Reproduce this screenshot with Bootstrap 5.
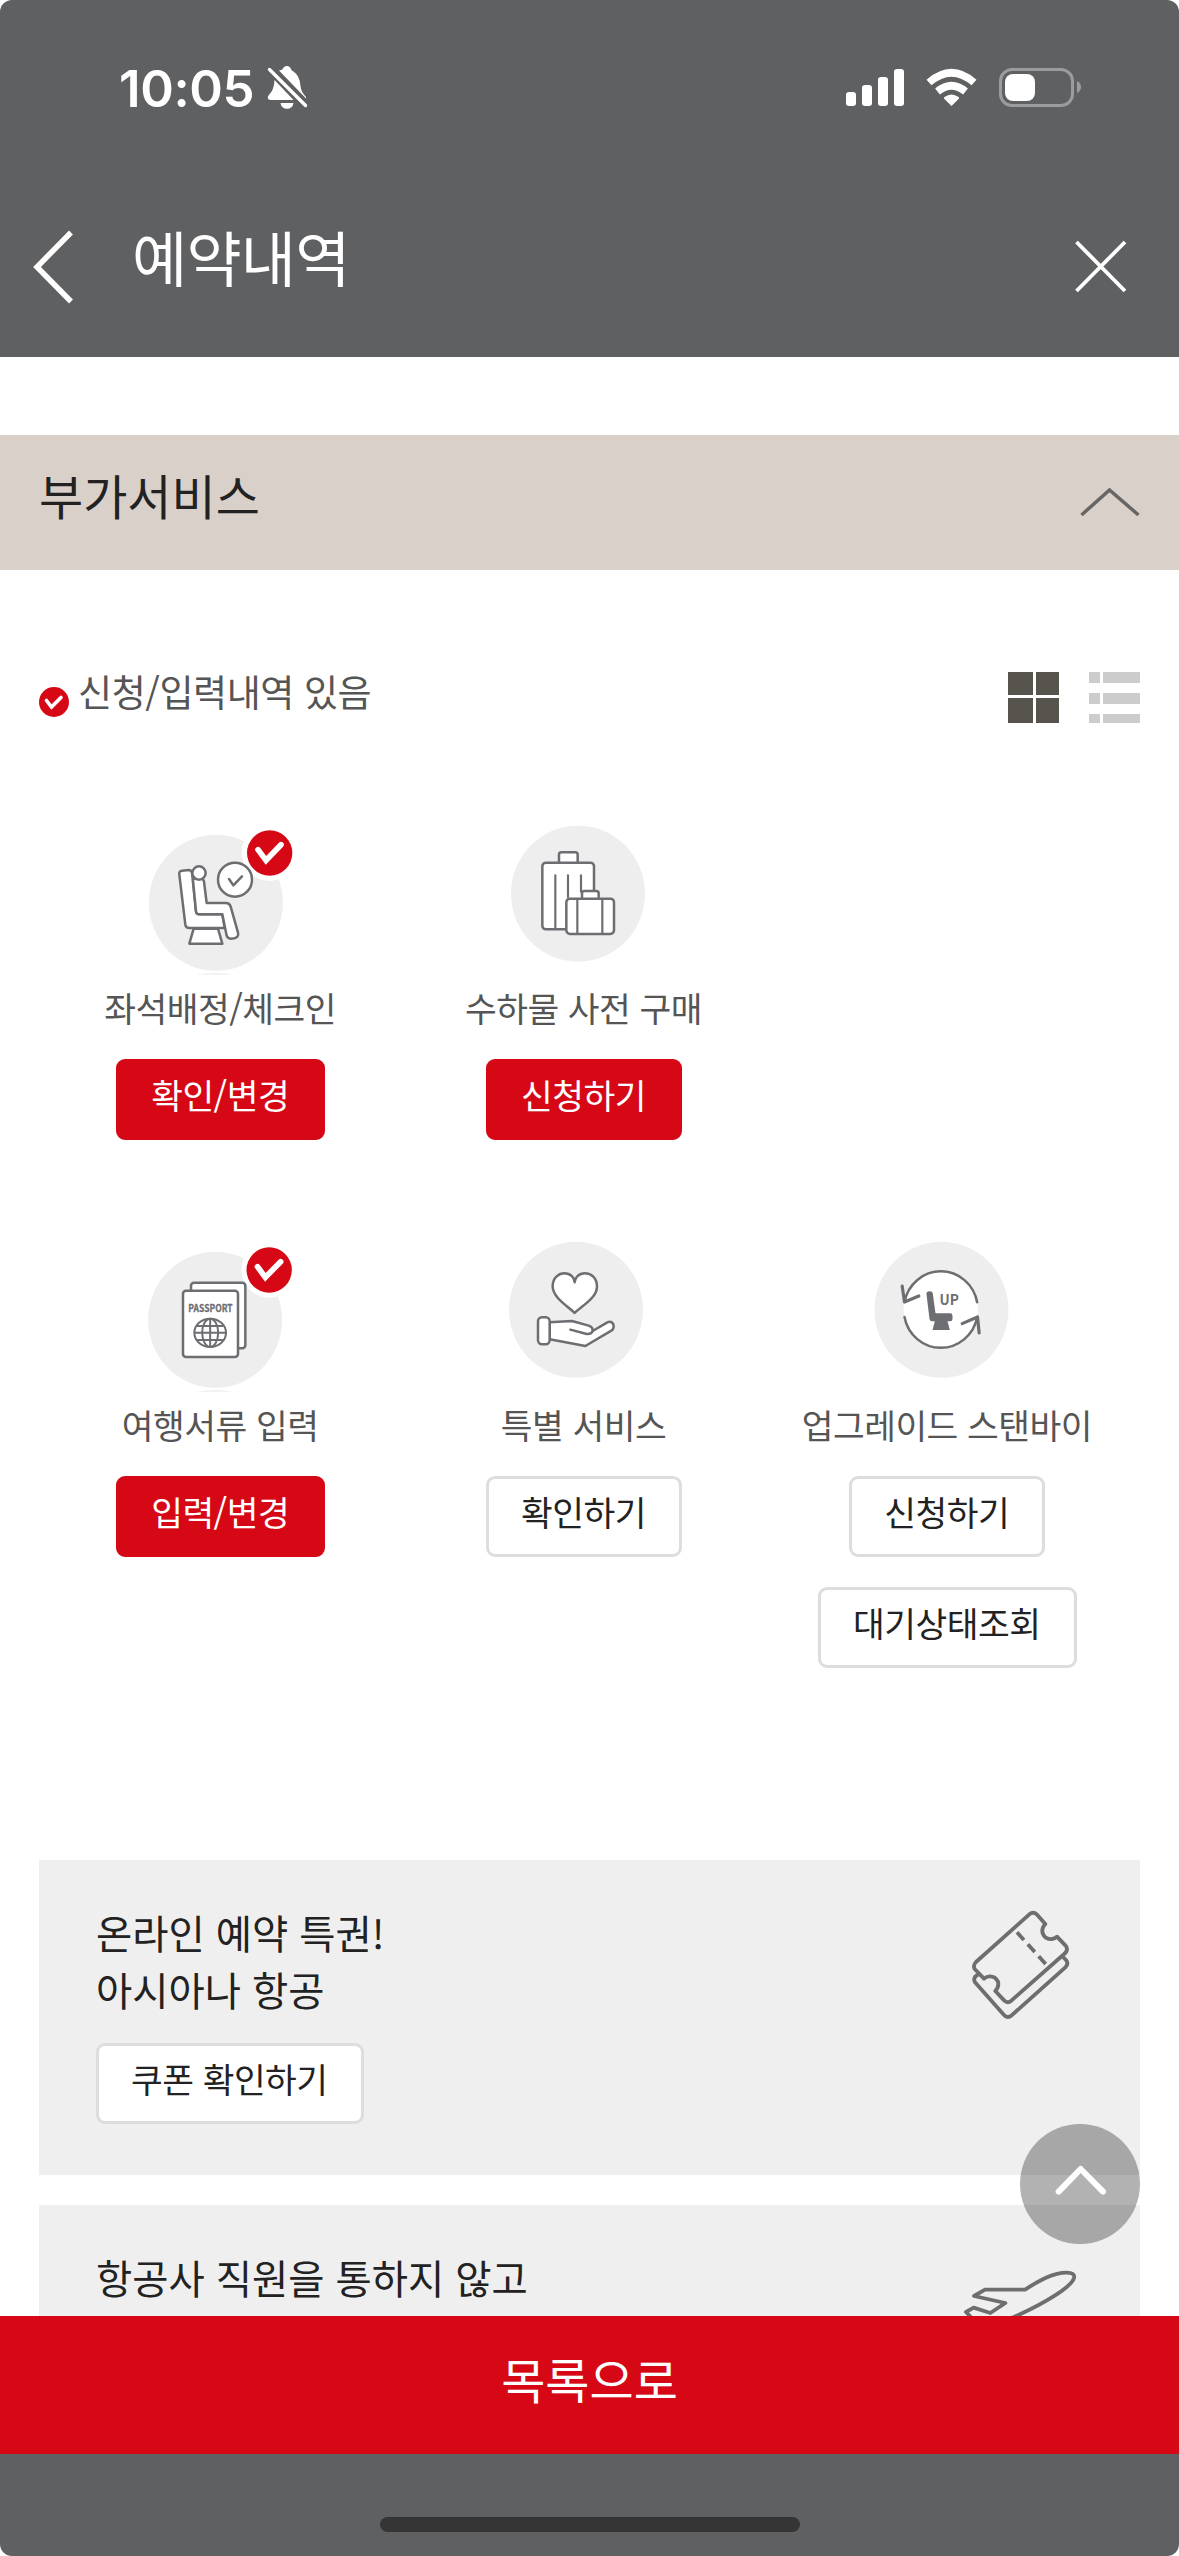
<!DOCTYPE html>
<html lang="ko">
<head>
<meta charset="utf-8">
<meta name="viewport" content="width=device-width, initial-scale=1">
<title>예약내역</title>
<link href="https://cdn.jsdelivr.net/npm/bootstrap@5.3.0/dist/css/bootstrap.min.css" rel="stylesheet">
<style>
  :root { --brand: #d60815; --bar: #5f6062; --line: #6d6e72; }
  body { font-family: "Noto Sans CJK KR", "Noto Sans", sans-serif; color: #222; background: #fff; }
  svg { display: block; flex: none; }
  .screen { width: 1179px; height: 2556px; }
  .app-bar { height: 357px; background: var(--bar); border-radius: 12px 12px 0 0; }
  .status-row { height: 176px; padding: 0 98px 0 119px; }
  .clock { font: 600 51px/1 Inter, sans-serif; width: 139px; letter-spacing: -.4px; }
  .title-row { height: 181px; padding: 0 50px 0 32px; }
  .page-title { font-size: 60px; line-height: 80px; letter-spacing: -.8px; margin: 0 0 22px 58px; font-weight: 400; }
  .section-bar { height: 135px; margin-top: 78px; background: #dad0ca; padding: 0 39px; }
  .section-title { font-size: 48px; line-height: 70px; margin: 0 0 17px; font-weight: 400; }
  .legend-row { height: 51px; margin: 102px 39px 0; }
  .legend-text { font-size: 37px; line-height: 50px; color: #555; letter-spacing: -.4px; margin: 0 0 13px 9px; }
  .services { margin: 95px 50px 0 39px; height: 1042px; }
  .service { height: 417px; }
  .service-name { font-size: 34.5px; line-height: 50px; letter-spacing: -.5px; color: #555; margin: 4px 1px 27px 0; white-space: nowrap; }
  .btn-pill { flex: none; height: 81px; font-size: 34.5px; line-height: 50px; letter-spacing: -.5px; padding: 7px 33px 0 32px; border: 3px solid #ddd; border-radius: 9px; background: #fff; color: #222; display: flex; align-items: flex-start; }
  .btn-pill + .btn-pill { margin-top: 30px; }
  .btn-fill { background: var(--brand); border-color: var(--brand); color: #fff; }
  .promo { background: #efefef; margin: 0 39px 30px; height: 315px; padding: 46px 60px 0 57px; }
  .promo-text { font-size: 39.4px; line-height: 57px; margin: -3px 0 26px; }
  .to-top { right: 39px; bottom: 72px; width: 120px; height: 120px; background: rgba(0,0,0,.3); }
  .list-btn { height: 138px; background: var(--brand); color: #fff; font-size: 48px; line-height: 70px; padding-bottom: 14px; }
  .home-area { height: 102px; background: var(--bar); padding-top: 63px; border-radius: 0 0 12px 12px; }
  .home-pill { width: 420px; height: 15px; border-radius: 8px; background: #353535; }
</style>
</head>
<body>
<div class="screen d-flex flex-column overflow-hidden">

  <header class="app-bar text-white flex-shrink-0">
    <div class="status-row d-flex align-items-center">
      <div class="clock">10:05</div>
      <svg class="ms-2" width="42" height="46" viewBox="265 66 42 46" fill="#fff">
        <path d="M278 71.5Q281 71 281.500 70Q283 67 285.800 67Q288.800 67 290 70Q290.500 71.500 292.500 72.500Q299 77 299.500 87Q300 93 305 98V99.500Z"/>
        <path d="M273.500 81L292.500 101H270Q266.500 101 266.800 98Q267.500 96 269.500 94Q273 90 273.500 81Z"/>
        <path d="M279.500 104H292.500Q291.500 109.800 286 109.800Q280.500 109.800 279.500 104Z"/>
        <path d="M268.500 70.500L304.500 106.500" stroke="#fff" stroke-width="3.400" stroke-linecap="round"/>
      </svg>
      <svg class="ms-auto" width="236" height="44" viewBox="845 66 236 44" fill="#fff">
        <rect x="846" y="92" width="10" height="14" rx="3"/>
        <rect x="862" y="85" width="10" height="21" rx="3"/>
        <rect x="878" y="77" width="10" height="29" rx="3"/>
        <rect x="894" y="69" width="10" height="37" rx="3"/>
        <path d="M951.500 106L944 98.500Q943.500 97.500 944.500 97Q951.500 92 958.500 97Q959.500 97.500 959 98.500Z"/>
        <path d="M937.500 91.500Q951.500 80 965.500 91.500" fill="none" stroke="#fff" stroke-width="7.500"/>
        <path d="M929 82.500Q951.500 63 974 82.500" fill="none" stroke="#fff" stroke-width="7.500"/>
        <rect x="1000.500" y="69.500" width="72" height="36" rx="11.500" fill="none" stroke="#9b9c9e" stroke-width="3"/>
        <rect x="1005" y="74" width="30" height="27" rx="8"/>
        <path d="M1077 81Q1081 83 1081 87T1077 93Z" fill="#9b9c9e"/>
      </svg>
    </div>
    <div class="title-row d-flex align-items-center">
      <svg width="42" height="76" viewBox="32 229 42 76" fill="none" stroke="#fff" stroke-width="5.500"><path d="M71 232.500L37 267L71 301.500"/></svg>
      <h1 class="page-title">예약내역</h1>
      <svg class="ms-auto" width="56" height="56" viewBox="1073 239 56 56" fill="none" stroke="#fff" stroke-width="3.800"><path d="M1076.500 242L1125 291M1125 242L1076.500 291"/></svg>
    </div>
  </header>

  <main class="flex-grow-1 position-relative overflow-hidden" style="min-height:0">
    <div class="section-bar d-flex align-items-center justify-content-between">
      <h2 class="section-title">부가서비스</h2>
      <svg width="60" height="30" viewBox="1080 488 60 30" fill="none" stroke="#666" stroke-width="3.500"><path d="M1081.500 515L1109.500 490L1138.500 515"/></svg>
    </div>

    <div class="legend-row d-flex align-items-center">
      <svg class="mt-2" width="30" height="30" viewBox="0 0 30 30"><circle cx="15" cy="15" r="15" fill="#d60815"/><path d="M7.500 13.500L12.500 20L22 10.500" fill="none" stroke="#fff" stroke-width="3.600" stroke-linecap="round"/></svg>
      <div class="legend-text">신청/입력내역 있음</div>
      <svg class="ms-auto" width="132" height="51" viewBox="0 0 132 51" shape-rendering="crispEdges">
        <g fill="#57534d"><path d="M0 0h25v23H0zM28 0h23v23H28zM0 26h25v25H0zM28 26h23v25H28z"/></g>
        <g fill="#ccc"><path d="M81 0h11v11H81zM95 0h37v11H95zM81 21h11v11H81zM95 21h37v11H95zM81 42h11v9H81zM95 42h37v9H95z"/></g>
      </svg>
    </div>

    <div class="services">
      <div class="row g-0">
        <div class="col-4 service d-flex flex-column align-items-center">
          <svg width="160" height="160" viewBox="183 54 480 480">
            <ellipse cx="407.500" cy="308.500" rx="201" ry="204" fill="#eee"/>
            <path d="M350 524Q405 514 460 524Z" fill="#eee"/>
            <circle cx="569" cy="159" r="84" fill="#fff"/>
            <g fill="#fff" stroke="#6d6e72" stroke-width="7.500" stroke-linejoin="round" stroke-linecap="round">
              <path d="M341 386L328 431H427L414 386Z"/>
              <path d="M298 224Q296 213 306 212L326 210Q334 210 336 218L348 334Q349 343 358 343H427L434 384H328Q318 384 316 374Z"/>
              <path d="M339 240Q340 235 346 236H364Q371 238 372 245L380 309H438Q449 309 452 320L474 398Q477 412 463 415L452 416Q443 416 440 407L427 343H358Q349 343 348 334Z"/>
              <circle cx="357" cy="219" r="20"/>
              <circle cx="465" cy="239" r="51"/>
              <path d="M447 237L460 256L486 229" fill="none"/>
            </g>
            <circle cx="569" cy="159" r="68" fill="#d60815"/>
            <path d="M534 149L558 181L603 134" fill="none" stroke="#fff" stroke-width="17" stroke-linecap="round"/>
          </svg>
          <div class="service-name">좌석배정/체크인</div>
          <button class="btn btn-pill btn-fill">확인/변경</button>
        </div>
        <div class="col-4 service d-flex flex-column align-items-center">
          <svg width="160" height="160" viewBox="192 54 480 480">
            <ellipse cx="414" cy="281" rx="201" ry="204" fill="#eee"/>
            <g fill="#fff" stroke="#6d6e72" stroke-width="7.500" stroke-linecap="round">
              <rect x="357" y="157" width="56" height="34" rx="7"/>
              <rect x="307" y="188" width="155" height="200" rx="11"/>
              <path d="M346 226V386M384 226V292M423 226V275" fill="none" stroke-width="6.500"/>
              <rect x="426" y="273" width="50" height="28" rx="7"/>
              <rect x="379" y="296" width="143" height="106" rx="11"/>
              <path d="M412 298V400M487 298V400" fill="none" stroke-width="6.500"/>
            </g>
          </svg>
          <div class="service-name">수하물 사전 구매</div>
          <button class="btn btn-pill btn-fill">신청하기</button>
        </div>
      </div>
      <div class="row g-0">
        <div class="col-4 service d-flex flex-column align-items-center">
          <svg width="160" height="160" viewBox="183 45 480 480">
            <ellipse cx="405.500" cy="299.500" rx="201" ry="204" fill="#eee"/>
            <path d="M350 515Q405 505 460 515Z" fill="#eee"/>
            <circle cx="567.500" cy="150" r="83" fill="#fff"/>
            <g fill="#fff" stroke="#6d6e72" stroke-width="7.500">
              <rect x="333" y="188" width="163" height="197" rx="9"/>
              <rect x="309" y="212" width="165" height="199" rx="9"/>
            </g>
            <text x="325" y="276" font-family="Noto Sans CJK KR, sans-serif" font-weight="700" font-size="30" textLength="133" lengthAdjust="spacingAndGlyphs" fill="#6d6e72" stroke="#6d6e72" stroke-width=".8">PASSPORT</text>
            <g fill="none" stroke="#6d6e72" stroke-width="6">
              <ellipse cx="390.500" cy="338.500" rx="47.500" ry="42.500"/>
              <ellipse cx="390.500" cy="338.500" rx="24" ry="42.500"/>
              <path d="M390.500 296V381M343 338.500H438M351 318H430M351 360H430"/>
            </g>
            <circle cx="567.500" cy="150" r="68" fill="#d60815"/>
            <path d="M532.500 140L556 172L602 125" fill="none" stroke="#fff" stroke-width="17" stroke-linecap="round"/>
          </svg>
          <div class="service-name">여행서류 입력</div>
          <button class="btn btn-pill btn-fill">입력/변경</button>
        </div>
        <div class="col-4 service d-flex flex-column align-items-center">
          <svg width="160" height="160" viewBox="192 45 480 480">
            <ellipse cx="408" cy="269.500" rx="201" ry="204" fill="#eee"/>
            <g fill="#fff" stroke="#6d6e72" stroke-width="7.500" stroke-linejoin="round" stroke-linecap="round">
              <path d="M404 279C386 260 338 234 338 199C338 172 358 160 373 160C392 160 404 174 404 187C404 174 416 160 435 160C453 160 471 173 471 200C471 234 422 260 404 279Z"/>
              <path d="M329 307L396 303L446 317Q459 321 458 333L502 307Q514 302 520 313Q524 325 514 332L436 378L329 358Z"/>
              <path d="M391 329L440 342Q455 343 458 333" fill="none"/>
              <rect x="294" y="292" width="35" height="81" rx="12"/>
            </g>
          </svg>
          <div class="service-name">특별 서비스</div>
          <button class="btn btn-pill">확인하기</button>
        </div>
        <div class="col-4 service d-flex flex-column align-items-center">
          <svg width="160" height="160" viewBox="262.500 45 480 480">
            <ellipse cx="486" cy="269.500" rx="201" ry="204" fill="#eee"/>
            <circle cx="484" cy="267" r="112" fill="#fff"/>
            <g fill="none" stroke="#6d6e72" stroke-width="7.500" stroke-linecap="round" stroke-linejoin="round">
              <path d="M375 246A111 114 0 0 1 593 247"/>
              <path d="M375 291A111 114 0 0 0 593 291"/>
              <path d="M368 198L375 246L418 228M548 311L594 291L599 339" stroke-width="9.500"/>
            </g>
            <path d="M441 223Q440 214 450 214Q459 214 460 221L468 280H512Q519 280 519 287V297Q519 304 512 304H504L511 330H459L466 304H458Q451 304 450 297Z" fill="#6d6e72"/>
            <text x="480" y="254" font-family="Noto Sans CJK KR, sans-serif" font-weight="700" font-size="44" textLength="58" lengthAdjust="spacingAndGlyphs" fill="#6d6e72">UP</text>
          </svg>
          <div class="service-name">업그레이드 스탠바이</div>
          <button class="btn btn-pill">신청하기</button>
          <button class="btn btn-pill">대기상태조회</button>
        </div>
      </div>
    </div>

    <section class="promo d-flex justify-content-between align-items-start">
      <div>
        <p class="promo-text">온라인 예약 특권!<br>아시아나 항공</p>
        <button class="btn btn-pill">쿠폰 확인하기</button>
      </div>
      <svg width="120" height="120" viewBox="180 198 360 360" fill="none" stroke="#6d6e70" stroke-width="11.500" stroke-linejoin="round">
        <path d="M224 387Q218 376 228 366L388 223Q400 213 410 223L436 252Q424 264 428 280Q436 300 456 297Q464 297 471 290L496 316Q506 327 496 339L334 482Q323 491 313 482L286 453Q298 440 294 425Q286 408 268 409Q258 410 252 416Z"/>
        <path d="M236 403Q217 412 225 427L312 525Q323 537 335 526L496 382Q507 371 498 360L486 348"/>
        <path d="M351 277L437 372" stroke-dasharray="31 17.500"/>
      </svg>
    </section>
    <section class="promo d-flex justify-content-between align-items-start">
      <p class="promo-text">항공사 직원을 통하지 않고</p>
      <svg width="120" height="120" viewBox="180 1233 360 360" fill="none" stroke="#6d6e70" stroke-width="11.500" stroke-linejoin="round">
        <path d="M240 1460L198 1416L221 1403L271 1419L316 1389L222 1368L255 1349H375C420 1320 460 1298 500 1298Q526 1298 522 1314C514 1342 430 1392 340 1432Z"/>
      </svg>
    </section>

    <a class="to-top position-absolute rounded-circle d-flex align-items-center justify-content-center" href="#" aria-label="맨 위로">
      <svg width="120" height="120" viewBox="360 852 360 360" fill="none" stroke="#fff" stroke-width="18" stroke-linecap="round" stroke-linejoin="round"><path d="M476 1055L542 987L609 1055"/></svg>
    </a>
  </main>

  <div class="list-btn flex-shrink-0 d-flex align-items-center justify-content-center">목록으로</div>
  <footer class="home-area flex-shrink-0 d-flex justify-content-center"><div class="home-pill"></div></footer>
</div>
<script src="https://cdn.jsdelivr.net/npm/bootstrap@5.3.0/dist/js/bootstrap.bundle.min.js"></script>
</body>
</html>
